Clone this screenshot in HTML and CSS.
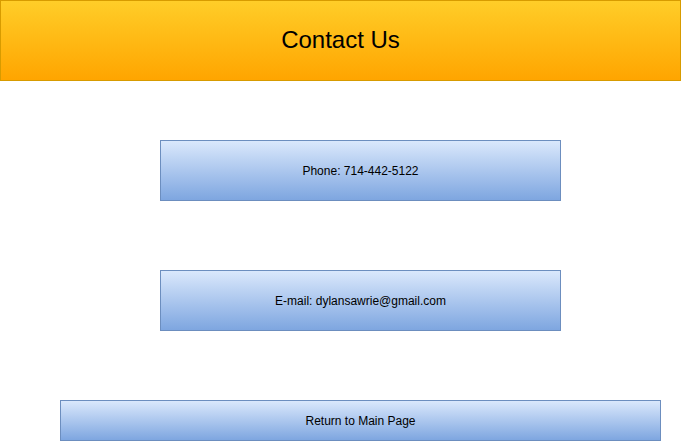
FILE: index.html
```html
<!DOCTYPE html>
<html>
<head>
<meta charset="utf-8">
<link rel="stylesheet" href="styles.css">
</head>
<body>
<header class="header">Contact Us</header>
<main class="content">
  <div class="card card-phone">Phone: 714-442-5122</div>
  <div class="card card-email">E-mail: dylansawrie@gmail.com</div>
  <div class="card return-btn">Return to Main Page</div>
</main>
</body>
</html>
```
FILE: styles.css
```css
* { box-sizing: border-box; }
html, body { margin: 0; padding: 0; background: #fff; }
body {
  font-family: "Liberation Sans", Arial, sans-serif;
  color: #000;
  width: 681px;
  height: 441px;
  overflow: hidden;
}
.header {
  height: 81px;
  width: 681px;
  border: 1px solid #d79b00;
  background: linear-gradient(to bottom, #ffcd28, #ffa500);
  display: flex;
  align-items: center;
  justify-content: center;
  font-size: 24px;
  padding-bottom: 1px;
}
.content {
  display: flex;
  flex-direction: column;
  align-items: flex-start;
}
.card {
  border: 1px solid #6c8ebf;
  background: linear-gradient(to bottom, #dae8fc, #7ea6e0);
  display: flex;
  align-items: center;
  justify-content: center;
  font-size: 12px;
}
.card-phone {
  margin-top: 59px;
  margin-left: 160px;
  width: 401px;
  height: 61px;
}
.card-email {
  margin-top: 69px;
  margin-left: 160px;
  width: 401px;
  height: 61px;
}
.return-btn {
  margin-top: 69px;
  margin-left: 60px;
  width: 601px;
  height: 41px;
}
```
